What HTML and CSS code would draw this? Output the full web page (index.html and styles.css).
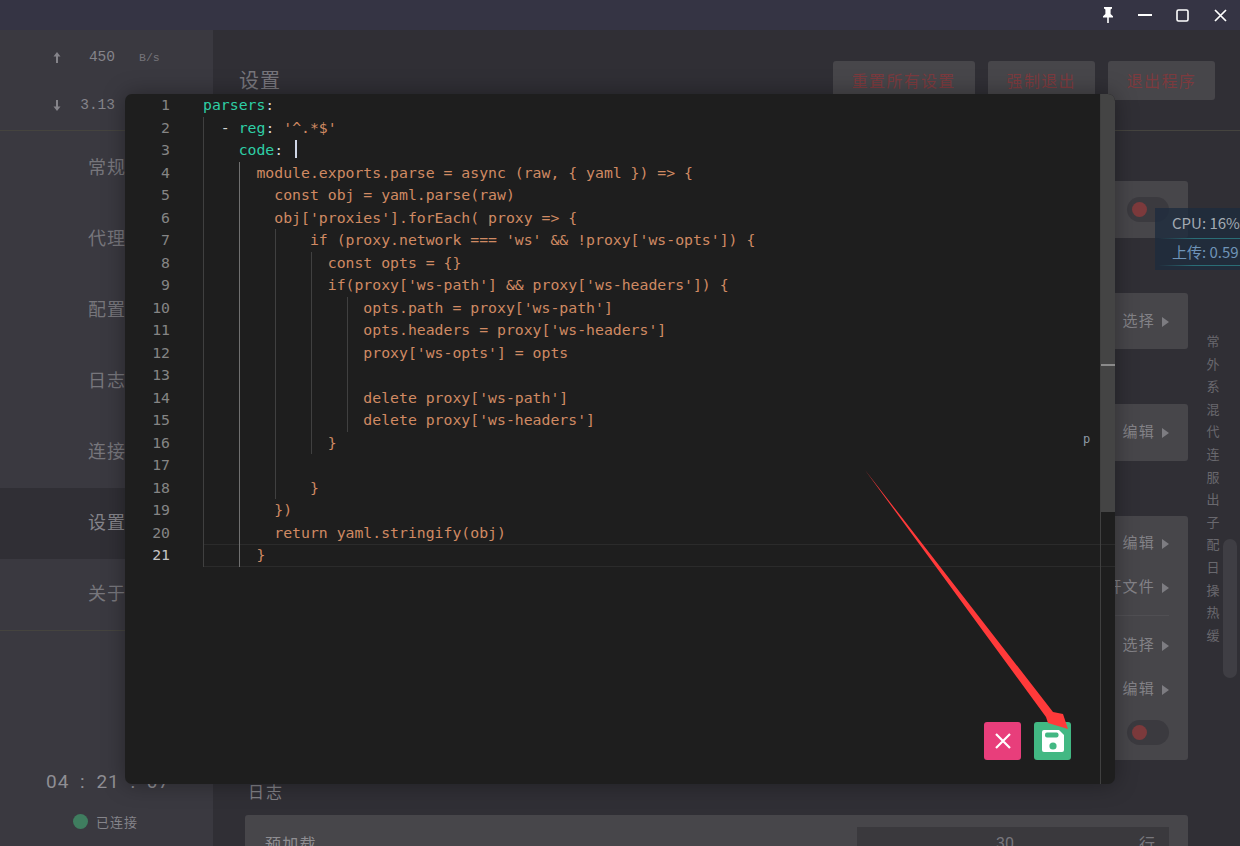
FILE: index.html
```html
<!DOCTYPE html>
<html lang="zh-CN">

<head>
    <meta charset="UTF-8">
    <meta name="viewport" content="width=device-width, initial-scale=1.0">
    <title>设置</title>
    <link rel="stylesheet" href="styles.css">
</head>

<body>
    <div class="app">
        <!-- 标题栏 -->
        <header class="titlebar">
            <button class="win-btn">
                <svg width="14" height="16" viewBox="0 0 14 16"><path d="M3 0h8v1.6L9.6 2.6V7l2.4 2.2V10.6H7.8V16H6.2V10.6H2V9.2L4.4 7V2.6L3 1.6z" fill="#fff"/></svg>
            </button>
            <button class="win-btn">
                <svg width="14" height="2" viewBox="0 0 14 2"><path d="M0 0h14v2H0z" fill="#fff"/></svg>
            </button>
            <button class="win-btn">
                <svg width="13" height="13" viewBox="0 0 13 13"><rect x="1" y="1" width="11" height="11" rx="1.5" fill="none" stroke="#fff" stroke-width="1.6"/></svg>
            </button>
            <button class="win-btn">
                <svg width="13" height="13" viewBox="0 0 13 13"><path d="M1 1l11 11M12 1L1 12" stroke="#fff" stroke-width="1.7" fill="none"/></svg>
            </button>
        </header>

        <div class="layout">
            <!-- 左侧导航 -->
            <aside class="sidebar">
                <div class="traffic">
                    <div class="traffic-row">
                        <svg class="traffic-arrow" width="8" height="11" viewBox="0 0 8 11"><path d="M4 0L7.5 4.5H5V11H3V4.5H.5z" fill="#85848a"/></svg>
                        <span class="traffic-value">450</span>
                        <span class="traffic-unit">B/s</span>
                    </div>
                    <div class="traffic-row">
                        <svg class="traffic-arrow" width="8" height="11" viewBox="0 0 8 11"><path d="M4 11L7.5 6.5H5V0H3V6.5H.5z" fill="#85848a"/></svg>
                        <span class="traffic-value">3.13</span>
                    </div>
                </div>
                <nav class="nav">
                    <a class="nav-item">常规</a>
                    <a class="nav-item">代理</a>
                    <a class="nav-item">配置</a>
                    <a class="nav-item">日志</a>
                    <a class="nav-item">连接</a>
                    <a class="nav-item active">设置</a>
                    <a class="nav-item">关于</a>
                </nav>
                <div class="clock">04 : 21 : 07</div>
                <div class="status"><i class="status-dot"></i>已连接</div>
            </aside>

            <!-- 设置页 -->
            <main class="main">
                <div class="page-head">
                    <h1 class="page-title">设置</h1>
                    <button class="danger-btn">重置所有设置</button>
                    <button class="danger-btn">强制退出</button>
                    <button class="danger-btn">退出程序</button>
                </div>
                <div class="page-body">
                    <div class="content">
                        <section class="section">
                            <div class="card">
                                <div class="row"><span class="toggle"><i></i></span></div>
                            </div>
                        </section>
                        <section class="section">
                            <div class="card">
                                <div class="row"><span class="action">选择</span></div>
                            </div>
                        </section>
                        <section class="section">
                            <div class="card">
                                <div class="row"><span class="action">编辑</span></div>
                            </div>
                        </section>
                        <section class="section">
                            <div class="card tall">
                                <div class="row"><span class="action">编辑</span></div>
                                <div class="row"><span class="action">打开文件</span></div>
                                <div class="divider"></div>
                                <div class="row"><span class="action">选择</span></div>
                                <div class="row"><span class="action">编辑</span></div>
                                <div class="row"><span class="toggle"><i></i></span></div>
                            </div>
                        </section>
                        <section class="section">
                            <h2 class="section-title">日志</h2>
                            <div class="card">
                                <div class="row">
                                    <span class="row-label">预加载</span>
                                    <div class="field"><span class="field-value">30</span><span class="field-unit">行</span></div>
                                </div>
                            </div>
                        </section>
                    </div>
                    <ul class="rail">
                        <li>常</li><li>外</li><li>系</li><li>混</li><li>代</li><li>连</li><li>服</li>
                        <li>出</li><li>子</li><li>配</li><li>日</li><li>操</li><li>热</li><li>缓</li>
                    </ul>
                </div>
                <div class="page-scroll"></div>
            </main>
        </div>

        <!-- 悬浮窗 -->
        <div class="monitor">
            <div class="monitor-row">CPU: 16%</div>
            <div class="monitor-row blue">上传: 0.59</div>
        </div>

        <!-- 编辑器弹窗 -->
        <div class="modal">
            <div class="editor">
                <div class="line"><span class="ln">1</span><span class="code"><b>parsers</b><u>:</u></span></div>
                <div class="line"><span class="ln">2</span><span class="code">  <u>-</u> <b>reg</b><u>:</u> '^.*$'</span></div>
                <div class="line"><span class="ln">3</span><span class="code">    <b>code</b><u>:</u> <i class="cursor"></i></span></div>
                <div class="line"><span class="ln">4</span><span class="code">      module.exports.parse = async (raw, { yaml }) =&gt; {</span></div>
                <div class="line"><span class="ln">5</span><span class="code">        const obj = yaml.parse(raw)</span></div>
                <div class="line"><span class="ln">6</span><span class="code">        obj['proxies'].forEach( proxy =&gt; {</span></div>
                <div class="line"><span class="ln">7</span><span class="code">            if (proxy.network === 'ws' &amp;&amp; !proxy['ws-opts']) {</span></div>
                <div class="line"><span class="ln">8</span><span class="code">              const opts = {}</span></div>
                <div class="line"><span class="ln">9</span><span class="code">              if(proxy['ws-path'] &amp;&amp; proxy['ws-headers']) {</span></div>
                <div class="line"><span class="ln">10</span><span class="code">                  opts.path = proxy['ws-path']</span></div>
                <div class="line"><span class="ln">11</span><span class="code">                  opts.headers = proxy['ws-headers']</span></div>
                <div class="line"><span class="ln">12</span><span class="code">                  proxy['ws-opts'] = opts</span></div>
                <div class="line"><span class="ln">13</span><span class="code"> </span></div>
                <div class="line"><span class="ln">14</span><span class="code">                  delete proxy['ws-path']</span></div>
                <div class="line"><span class="ln">15</span><span class="code">                  delete proxy['ws-headers']</span></div>
                <div class="line"><span class="ln">16</span><span class="code">              }</span></div>
                <div class="line"><span class="ln">17</span><span class="code"> </span></div>
                <div class="line"><span class="ln">18</span><span class="code">            }</span></div>
                <div class="line"><span class="ln">19</span><span class="code">        })</span></div>
                <div class="line"><span class="ln">20</span><span class="code">        return yaml.stringify(obj)</span></div>
                <div class="line current"><span class="ln">21</span><span class="code">      }</span></div>
            </div>

            <!-- 缩进线 -->
            <i class="guide guide-1"></i>
            <i class="guide guide-2"></i>
            <i class="guide guide-3"></i>
            <i class="guide guide-4"></i>
            <i class="guide guide-5"></i>

            <span class="stray">p</span>
            <div class="scroll-track"><div class="scroll-thumb"><i></i></div></div>

            <div class="modal-actions">
                <button class="icon-btn cancel">
                    <svg width="18" height="18" viewBox="0 0 18 18"><path d="M2 2l14 14M16 2L2 16" stroke="#fff" stroke-width="2.2" fill="none"/></svg>
                </button>
                <button class="icon-btn save">
                    <svg width="22" height="22" viewBox="0 0 22 22">
                        <path d="M2 0h15l5 5v15a2 2 0 0 1-2 2H2a2 2 0 0 1-2-2V2a2 2 0 0 1 2-2z" fill="#fff"/>
                        <rect x="3" y="2.5" width="13.5" height="5" rx="2" fill="#42b883"/>
                        <circle cx="11" cy="16" r="3.6" fill="#42b883"/>
                    </svg>
                </button>
            </div>
        </div>

        <!-- 截图上的红色箭头 -->
        <svg class="mark-arrow" width="210" height="270" viewBox="0 0 210 270">
            <path d="M0 0L188 242L198 244L203 259L183 253L181 247z" fill="#ff3a3a"/>
        </svg>
    </div>
</body>

</html>
```

FILE: styles.css
```css
html,
body {
    padding: 0;
    margin: 0;
    height: 100%;
    overflow: hidden;
}

body {
    background: #302f35;
    color: #8a898e;
    font-family: "Noto Sans CJK SC", "Liberation Sans", sans-serif;
}

ul {
    margin: 0;
    padding: 0;
    list-style: none;
}

button {
    border: 0;
    padding: 0;
    font-family: inherit;
}

.app {
    position: relative;
    display: flex;
    flex-direction: column;
    width: 1240px;
    height: 846px;
    overflow: hidden;
}

/* 标题栏 */
.titlebar {
    display: flex;
    justify-content: flex-end;
    align-items: center;
    flex: none;
    height: 30px;
    padding-right: 1px;
    background: #353444;
}

.win-btn {
    display: flex;
    justify-content: center;
    align-items: center;
    width: 37.5px;
    height: 30px;
    background: none;
}

.layout {
    display: flex;
    flex: 1;
    min-height: 0;
}

/* 左侧 */
.sidebar {
    display: flex;
    flex-direction: column;
    flex: none;
    width: 213px;
    background: #3a3940;
}

.traffic {
    flex: none;
    height: 101px;
    padding-top: 3px;
    box-sizing: border-box;
    border-bottom: 1px solid #45443f;
}

.traffic-row {
    display: flex;
    align-items: center;
    height: 48px;
    padding-left: 53px;
    font-family: "Liberation Mono", monospace;
}

.traffic-arrow {
    flex: none;
}

.traffic-value {
    width: 54px;
    text-align: right;
    font-size: 14.5px;
    color: #85848a;
}

.traffic-unit {
    margin-left: 24px;
    font-size: 11.5px;
    color: #75747a;
}

.nav {
    display: flex;
    flex-direction: column;
    flex: none;
    padding-top: 2px;
    border-bottom: 1px solid #45443f;
}

.nav-item {
    display: flex;
    align-items: center;
    height: 71px;
    padding: 0 0 5px 88px;
    box-sizing: border-box;
    font-size: 18px;
    letter-spacing: 1px;
    color: #77767c;
}

.nav-item.active {
    background: #302f35;
    color: #85848a;
}

.clock {
    margin-top: auto;
    padding-left: 46px;
    font-family: Roboto, sans-serif;
    font-size: 19px;
    line-height: 24px;
    letter-spacing: 1px;
    word-spacing: 5px;
    white-space: pre;
    color: #8f8e94;
}

.status {
    display: flex;
    align-items: center;
    height: 20px;
    margin: 17px 0 15px;
    padding-left: 73px;
    font-size: 13px;
    letter-spacing: 1px;
    color: #85848a;
}

.status-dot {
    width: 15px;
    height: 15px;
    margin-right: 8px;
    border-radius: 50%;
    background: #3f7d5f;
}

/* 主内容 */
.main {
    position: relative;
    flex: 1;
    min-width: 0;
}

.page-head {
    display: flex;
    align-items: center;
    gap: 13px;
    height: 101px;
    padding: 1px 25px 0 26px;
    box-sizing: border-box;
    border-bottom: 1px solid #45443f;
}

.page-title {
    margin: 0 auto 2px 0;
    font-size: 20px;
    font-weight: 400;
    letter-spacing: 1px;
    color: #77767c;
}

.danger-btn {
    height: 39px;
    padding: 0 19px 2px;
    border-radius: 3px;
    background: #47464a;
    font-size: 16px;
    letter-spacing: 1.3px;
    color: #7c3a3e;
}

.page-body {
    display: flex;
}

.content {
    flex: 1;
    min-width: 0;
    padding: 50px 0 0 32px;
}

.section {
    margin-bottom: 55px;
}

.section-title {
    height: 24px;
    margin: -36px 0 12px 3px;
    font-size: 16px;
    font-weight: 400;
    line-height: 24px;
    letter-spacing: 2px;
    color: #807f85;
}

.card {
    padding: 6px 19px 6px 20px;
    border-radius: 3px;
    background: #47464a;
}

.row {
    display: flex;
    align-items: center;
    height: 44.5px;
}

.tall .row {
    height: 43.5px;
}

.divider {
    height: 1px;
    margin: 6px 0 8px;
    background: #504f53;
}

.row-label {
    font-size: 16px;
    letter-spacing: 1.3px;
    color: #8f8e92;
}

.action {
    display: flex;
    align-items: flex-start;
    height: 20px;
    margin-left: auto;
    font-size: 15px;
    line-height: 18px;
    letter-spacing: 1.2px;
    color: #838287;
}

.action::after {
    content: "";
    margin: 6px 0 0 7px;
    border-left: 7px solid #7d7c81;
    border-top: 5px solid transparent;
    border-bottom: 5px solid transparent;
}

.toggle {
    display: flex;
    align-items: center;
    width: 42px;
    height: 25px;
    margin-left: auto;
    padding-left: 5px;
    box-sizing: border-box;
    border-radius: 13px;
    background: #3b3a3f;
}

.toggle i {
    width: 15px;
    height: 15px;
    border-radius: 50%;
    background: #7c3a3c;
}

.field {
    display: flex;
    align-items: center;
    width: 312px;
    height: 32px;
    margin-left: auto;
    padding-right: 14px;
    box-sizing: border-box;
    background: #3a393d;
    font-size: 16px;
    color: #77767c;
}

.field-value {
    flex: 1;
    padding-left: 14px;
    text-align: center;
    font-family: Roboto, sans-serif;
}

.rail {
    flex: none;
    width: 52px;
    padding: 199px 2px 0 0;
    box-sizing: border-box;
    text-align: center;
    font-size: 13px;
    line-height: 22.6px;
    color: #69686e;
}

.page-scroll {
    position: absolute;
    top: 509px;
    right: 3px;
    width: 14px;
    height: 139px;
    border-radius: 7px;
    background: #3f3e44;
}

/* 悬浮窗 */
.monitor {
    position: absolute;
    top: 208px;
    left: 1155px;
    width: 110px;
    height: 62px;
    background: rgba(29, 44, 62, 0.78);
    font-size: 15px;
    color: #a3aab2;
}

.monitor-row {
    height: 30px;
    padding-left: 17px;
    line-height: 30px;
    white-space: nowrap;
    border-bottom: 1px solid;
    border-image: linear-gradient(to right, transparent 4%, #2a6d76 35%) 1;
}

.monitor-row.blue {
    height: 26px;
    line-height: 26px;
    color: #6f94b8;
}

/* 编辑器弹窗 */
.modal {
    position: absolute;
    top: 94px;
    left: 125px;
    width: 990px;
    height: 690px;
    border-radius: 7px;
    background: #1e1e1e;
    box-shadow: 0 0 22px rgba(0, 0, 0, 0.35);
}

.editor {
    font-family: "DejaVu Sans Mono", monospace;
    font-size: 14.8px;
    line-height: 22.5px;
}

.line {
    display: flex;
    height: 22.5px;
}

.ln {
    flex: none;
    width: 45px;
    margin-right: 33px;
    text-align: right;
    color: #858585;
}

.code {
    flex: 1;
    min-width: 0;
    white-space: pre;
    color: #d08a63;
}

.code b {
    font-weight: 400;
    color: #2ecfa6;
}

.code u {
    text-decoration: none;
    color: #d4d4d4;
}

.current .ln {
    color: #c6c6c6;
}

.current .code {
    box-shadow: inset 0 1px #2b2b2b, inset 0 -1px #2b2b2b;
}

.cursor {
    display: inline-block;
    width: 2px;
    height: 18px;
    margin-left: 3px;
    vertical-align: -3px;
    background: #cfd6e6;
}

.guide {
    position: absolute;
    width: 1px;
    background: #404040;
}

.guide-1 { left: 78px; top: 22.5px; height: 450px; }
.guide-2 { left: 114px; top: 67.5px; height: 405px; background: #707070; }
.guide-3 { left: 150px; top: 135px; height: 270px; }
.guide-4 { left: 186px; top: 157.5px; height: 202.5px; }
.guide-5 { left: 222px; top: 202.5px; height: 135px; }

.stray {
    position: absolute;
    top: 338px;
    left: 958px;
    font-family: "DejaVu Sans Mono", monospace;
    font-size: 12px;
    color: #8d9aa6;
}

.scroll-track {
    position: absolute;
    top: 0;
    bottom: 0;
    left: 975px;
    width: 15px;
    border-left: 1px solid #404040;
    box-sizing: border-box;
}

.scroll-thumb {
    position: relative;
    height: 418px;
    border-top-right-radius: 7px;
    background: #444;
}

.scroll-thumb i {
    position: absolute;
    top: 270px;
    left: 0;
    right: 0;
    height: 2px;
    background: #8a8a8a;
}

.modal-actions {
    position: absolute;
    top: 628px;
    left: 859px;
    display: flex;
    gap: 13px;
}

.icon-btn {
    display: flex;
    justify-content: center;
    align-items: center;
    width: 37px;
    height: 38px;
    border-radius: 3px;
}

.cancel {
    background: #e83e7b;
}

.save {
    background: #42b883;
}

/* 红色箭头 */
.mark-arrow {
    position: absolute;
    top: 470px;
    left: 865px;
}
```
